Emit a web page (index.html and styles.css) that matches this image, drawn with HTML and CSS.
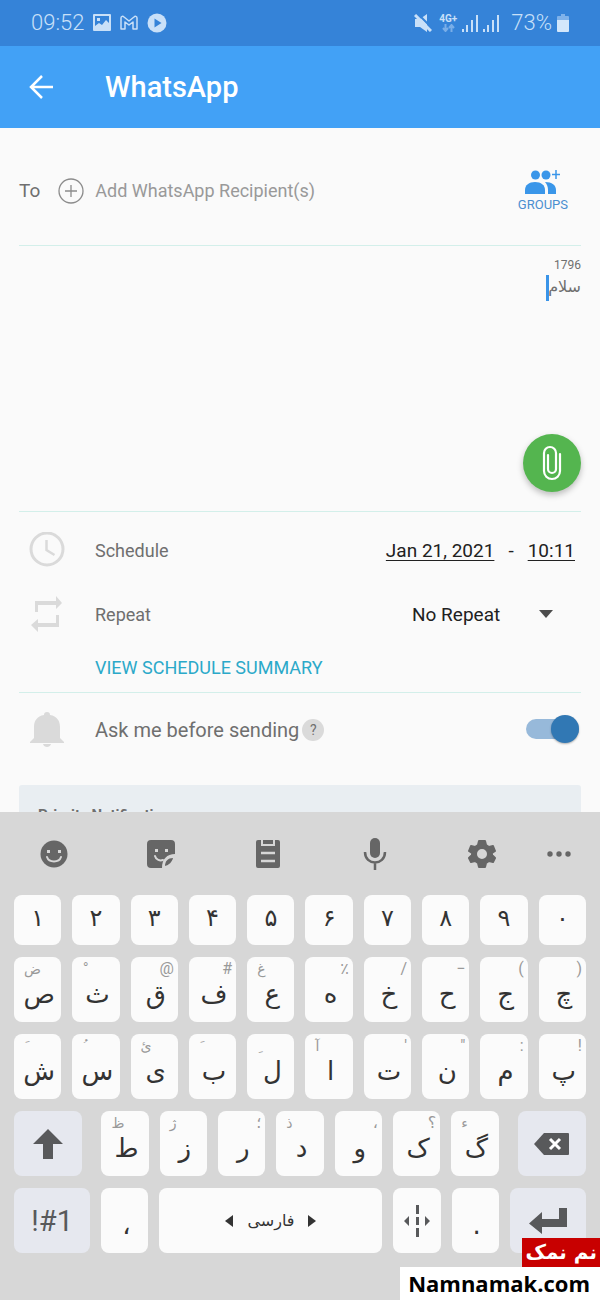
FILE: index.html
```html
<!DOCTYPE html>
<html lang="en">
<head>
  <meta charset="UTF-8">
  <meta name="viewport" content="width=device-width, initial-scale=1.0">
  <title>WhatsApp</title>
  <link rel="stylesheet" href="styles.css">
</head>
<body>
  <div class="screen">
    <div class="status-bar">
      <div class="status-group">
        <span class="status-text">09:52</span>
        <svg width="18" height="18" viewBox="0 0 18 18"><path fill="#c9e0f8" fill-rule="evenodd" d="M1 0h16a1 1 0 0 1 1 1v15a1 1 0 0 1-1 1H1a1 1 0 0 1-1-1V1a1 1 0 0 1 1-1zM2 2v10l4-3 3 2 4-5 3 3V2zM4 4h3v3H4z"/></svg>
        <svg width="18" height="16" viewBox="0 0 18 16"><path fill="none" stroke="#c9e0f8" stroke-width="1.5" stroke-linejoin="round" d="M1 14V3c0-2 2-2 3-1l5 4 5-4c1-1 3-1 3 1v11h-4V7L9 10 5 7v7z"/></svg>
        <svg width="20" height="20" viewBox="0 0 20 20"><circle cx="10" cy="10" r="9.500" fill="#c9e0f8"/><path fill="#3583d8" d="M7.500 5.500v9l7-4.500z"/></svg>
      </div>
      <div class="status-group status-right">
        <svg width="18" height="18" viewBox="0 0 18 18"><path fill="#c9e0f8" d="M1 5h5l7-5v18l-7-5H1z"/><path stroke="#3583d8" stroke-width="2" d="M3-1l16 16"/><path stroke="#c9e0f8" stroke-width="3" d="M1 1l16 16"/></svg>
        <span class="network">
          <span>4G+</span>
          <svg width="13" height="8" viewBox="0 0 13 8"><path fill="none" stroke="#79aee8" stroke-width="2" d="M3.500 0v7M1 4l2.500 3L6 4M9.500 8V1M7 4l2.500-3L12 4"/></svg>
        </span>
        <svg width="16" height="18" viewBox="0 0 16 18"><path fill="#c9e0f8" d="M0 15h2v3H0zM4 11h2v7H4zM9 6h2v12H9zM14 1h2v17h-2z"/></svg>
        <svg width="16" height="18" viewBox="0 0 16 18"><path fill="#c9e0f8" d="M0 15h2v3H0zM4 11h2v7H4zM9 6h2v12H9zM14 1h2v17h-2z"/></svg>
        <span class="status-text percent">73%</span>
        <svg width="12" height="18" viewBox="0 0 12 18"><path fill="#7fb2ea" d="M4 0h4v2h3a1 1 0 0 1 1 1v4H0V3a1 1 0 0 1 1-1h3z"/><path fill="#d3e7fb" d="M0 6h12v11a1 1 0 0 1-1 1H1a1 1 0 0 1-1-1z"/></svg>
      </div>
    </div>

    <header class="app-bar">
      <button class="icon-btn" type="button" aria-label="Back">
        <svg width="24" height="24" viewBox="0 0 24 24"><path fill="none" stroke="#fff" stroke-width="2.500" d="M13 1L2 12l11 11M2 12h22"/></svg>
      </button>
      <h1>WhatsApp</h1>
    </header>

    <main class="compose">
      <section class="recipient">
        <label for="recipient">To</label>
        <button class="icon-btn" type="button" aria-label="Add recipient">
          <svg width="26" height="26" viewBox="0 0 26 26"><circle cx="13" cy="13" r="12" fill="none" stroke="#8c8c8c" stroke-width="1.300"/><path stroke="#8c8c8c" stroke-width="1.300" d="M7 13h12M13 7v12"/></svg>
        </button>
        <input id="recipient" type="text" placeholder="Add WhatsApp Recipient(s)">
        <button class="groups" type="button">
          <svg width="36" height="26" viewBox="0 0 36 26"><g fill="#3a96e9"><circle cx="10.500" cy="6" r="4.500"/><circle cx="21" cy="6" r="4.500"/><path d="M0 25v-4c0-5 4-8 10-8s10 3 10 8v4z"/><path d="M20 13c7 0 11 3 11 8v4h-8v-4c0-3-1-6-3-8z"/></g><path stroke="#3a96e9" stroke-width="1.500" d="M31 1v9M27 5.500h8"/></svg>
          <span>GROUPS</span>
        </button>
      </section>

      <section class="message">
        <div class="counter">1796</div>
        <div class="message-field">
          <textarea dir="rtl" lang="fa" rows="1" aria-label="Message">سلام</textarea>
          <span class="caret"></span>
        </div>
        <button class="attach" type="button" aria-label="Attach">
          <svg width="20" height="36" viewBox="0 0 20 36"><path fill="none" stroke="#fff" stroke-width="2.200" stroke-linecap="round" d="M18 9v17a8 8 0 0 1-16 0V8a6 6 0 0 1 12 0v16a4 4 0 0 1-8 0V10"/></svg>
        </button>
      </section>

      <section class="schedule">
        <div class="row">
          <svg width="36" height="36" viewBox="0 0 36 36"><circle cx="18" cy="17" r="16" fill="none" stroke="#dadada" stroke-width="3"/><path fill="none" stroke="#dadada" stroke-width="2.500" d="M17.500 8v10l8 5"/></svg>
          <span class="label">Schedule</span>
          <span class="when">
            <a href="#date">Jan 21, 2021</a>
            <span>-</span>
            <a href="#time">10:11</a>
          </span>
        </div>
        <div class="row">
          <svg width="36" height="36" viewBox="0 0 36 36"><path fill="#dadada" d="M6 16V5h21V0l6 7-6 6V9H9v7zM30 19v12H9v5l-7-7 7-6v4h18v-8z"/></svg>
          <label class="label" for="repeat">Repeat</label>
          <span class="select">
            <select id="repeat">
              <option>No Repeat</option>
            </select>
            <svg width="14" height="8" viewBox="0 0 14 8"><path fill="#4c4c4c" d="M0 0h14L7 8z"/></svg>
          </span>
        </div>
        <a class="summary" href="#summary">VIEW SCHEDULE SUMMARY</a>
      </section>

      <section class="row confirm">
        <svg width="36" height="36" viewBox="0 0 36 36"><path fill="#dadada" d="M15 3a3 3 0 0 1 6 0c7 1 10 6 10 12v11l4 4v1H1v-1l4-4V15C5 9 8 4 15 3zM14 32h8c-1 4-7 4-8 0z"/></svg>
        <label class="label" for="ask">Ask me before sending</label>
        <button class="help" type="button">?</button>
        <input class="switch" id="ask" type="checkbox" role="switch" checked>
      </section>

      <section class="priority">Priority Notification</section>
    </main>

    <div class="keyboard">
      <div class="tools">
        <button class="icon-btn" type="button" aria-label="Emoji">
          <svg width="28" height="28" viewBox="0 0 28 28"><circle cx="14" cy="14" r="13.500" fill="#666"/><path fill="#d7d7d7" d="M7 10h3v3H7zM18 10h3v3h-3z"/><path fill="none" stroke="#d7d7d7" stroke-width="2" stroke-linecap="round" d="M7 17c2 6 12 6 14 0"/></svg>
        </button>
        <button class="icon-btn" type="button" aria-label="Stickers">
          <svg width="28" height="28" viewBox="0 0 28 28"><path fill="#666" d="M4 0h20a4 4 0 0 1 4 4v10c-8 0-13 5-13 14H4a4 4 0 0 1-4-4V4a4 4 0 0 1 4-4z"/><path fill="#666" d="M18 26c0-5 3-8 8-8-1 4-4 7-8 8z"/><path fill="#d7d7d7" d="M8 9h3v3H8zM18 9h3v3h-3z"/><path fill="none" stroke="#d7d7d7" stroke-width="2" stroke-linecap="round" d="M8 16c1 4 5 5 8 4"/></svg>
        </button>
        <button class="icon-btn" type="button" aria-label="Clipboard">
          <svg width="28" height="28" viewBox="0 0 28 28"><path fill="#666" d="M4 0h3v6h14V0h3a2 2 0 0 1 2 2v24a2 2 0 0 1-2 2H4a2 2 0 0 1-2-2V2a2 2 0 0 1 2-2zM9 0h10v4H9z"/><path stroke="#d7d7d7" stroke-width="2.500" d="M7 13h14M7 21h14"/></svg>
        </button>
        <button class="icon-btn" type="button" aria-label="Voice input">
          <svg width="28" height="32" viewBox="0 0 28 32"><rect x="9" y="0" width="10" height="20" rx="5" fill="#666"/><path fill="none" stroke="#666" stroke-width="2.500" d="M4 14c0 14 20 14 20 0M14 25v7"/></svg>
        </button>
        <button class="icon-btn" type="button" aria-label="Settings">
          <svg width="28" height="28" viewBox="0 0 28 28"><path fill="#666" fill-rule="evenodd" stroke="#666" stroke-width="2" stroke-linejoin="round" d="M11 1h6l1 4 3 2 4-1 2 5-3 2v2l3 3-2 4-4-1-3 2-1 4h-6l-1-4-3-2-4 1-2-4 3-3v-2l-3-2 2-5 4 1 3-2zM14 8a6 6 0 1 0 0 12 6 6 0 0 0 0-12z"/></svg>
        </button>
        <button class="icon-btn more" type="button" aria-label="More">
          <svg width="24" height="6" viewBox="0 0 24 6"><g fill="#666"><circle cx="3" cy="3" r="2.700"/><circle cx="12" cy="3" r="2.700"/><circle cx="21" cy="3" r="2.700"/></g></svg>
        </button>
      </div>

      <div class="keys" lang="fa">
        <div class="key-row digits">
          <button class="key">۱</button>
          <button class="key">۲</button>
          <button class="key">۳</button>
          <button class="key">۴</button>
          <button class="key">۵</button>
          <button class="key">۶</button>
          <button class="key">۷</button>
          <button class="key">۸</button>
          <button class="key">۹</button>
          <button class="key">۰</button>
        </div>
        <div class="key-row">
          <button class="key"><span class="alt">ض</span>ص</button>
          <button class="key"><span class="alt">&nbsp;ْ</span>ث</button>
          <button class="key"><span class="alt sign">@</span>ق</button>
          <button class="key"><span class="alt sign">#</span>ف</button>
          <button class="key"><span class="alt">غ</span>ع</button>
          <button class="key"><span class="alt sign">٪</span>ه</button>
          <button class="key"><span class="alt sign">/</span>خ</button>
          <button class="key"><span class="alt sign">−</span>ح</button>
          <button class="key"><span class="alt sign">(</span>ج</button>
          <button class="key"><span class="alt sign">)</span>چ</button>
        </div>
        <div class="key-row">
          <button class="key"><span class="alt">&nbsp;َ</span>ش</button>
          <button class="key"><span class="alt">&nbsp;ُ</span>س</button>
          <button class="key"><span class="alt">ئ</span>ی</button>
          <button class="key"><span class="alt">&nbsp;َ</span>ب</button>
          <button class="key"><span class="alt">&nbsp;ِ</span>ل</button>
          <button class="key"><span class="alt">آ</span>ا</button>
          <button class="key"><span class="alt sign">'</span>ت</button>
          <button class="key"><span class="alt sign">"</span>ن</button>
          <button class="key"><span class="alt sign">:</span>م</button>
          <button class="key"><span class="alt sign">!</span>پ</button>
        </div>
        <div class="key-row">
          <button class="key shift" aria-label="Shift">
            <svg width="30" height="30" viewBox="0 0 30 30"><path fill="#58595b" d="M15 0l15 15H20v15H10V15H0z"/></svg>
          </button>
          <button class="key"><span class="alt">ظ</span>ط</button>
          <button class="key"><span class="alt">ژ</span>ز</button>
          <button class="key"><span class="alt sign">؛</span>ر</button>
          <button class="key"><span class="alt">ذ</span>د</button>
          <button class="key"><span class="alt sign">،</span>و</button>
          <button class="key"><span class="alt sign">؟</span>ک</button>
          <button class="key"><span class="alt">ء</span>گ</button>
          <button class="key delete" aria-label="Delete">
            <svg width="36" height="22" viewBox="0 0 36 22"><path fill="#58595b" d="M10 0h24a1 1 0 0 1 1 1v20a1 1 0 0 1-1 1H10L0 11z"/><path stroke="#fff" stroke-width="3" d="M16 6l10 10M26 6L16 16"/></svg>
          </button>
        </div>
        <div class="key-row">
          <button class="key wide symbols" lang="en">!#1</button>
          <button class="key">،</button>
          <button class="key space">
            <svg width="8" height="12" viewBox="0 0 8 12"><path fill="#333" d="M8 0v12L0 6z"/></svg>
            <span>فارسی</span>
            <svg width="8" height="12" viewBox="0 0 8 12"><path fill="#333" d="M0 0v12l8-6z"/></svg>
          </button>
          <button class="key split" aria-label="Split keyboard">
            <svg width="26" height="32" viewBox="0 0 26 32"><path fill="#58595b" d="M5 11v10l-5-5zM21 11v10l5-5zM12 0h3v9h-3zM12 12h3v8h-3zM12 23h3v9h-3z"/></svg>
          </button>
          <button class="key">.</button>
          <button class="key wide" aria-label="Enter">
            <svg width="38" height="26" viewBox="0 0 38 26"><path fill="#58595b" d="M30 0h8v19H13v7L0 15.500 13 4v7h17z"/></svg>
          </button>
        </div>
      </div>
    </div>

    <div class="watermark">
      <span class="watermark-fa" lang="fa">نم نمک</span>
      <span class="watermark-en">Namnamak.com</span>
    </div>
  </div>
</body>
</html>
```

FILE: styles.css
```css
* {
  margin: 0;
  padding: 0;
  box-sizing: border-box;
}

body {
  font-family: Roboto, 'DejaVu Sans', sans-serif;
  background: #fafafa;
  color: #6f6f6f;
}

svg {
  display: block;
  flex: none;
}

button {
  border: none;
  background: none;
  font-family: inherit;
  color: inherit;
  cursor: pointer;
}

.screen {
  position: relative;
  height: 100vh;
  display: flex;
  flex-direction: column;
}

/* Status bar */
.status-bar {
  display: flex;
  justify-content: space-between;
  align-items: center;
  height: 46px;
  padding: 0 31px;
  background: #3583d8;
  color: #c9e0f8;
}

.status-group {
  display: flex;
  align-items: center;
  gap: 9px;
}

.status-right {
  gap: 5px;
}

.status-text {
  font-size: 22px;
  font-weight: 300;
  line-height: 48px;
}

.percent {
  margin-left: 7px;
}

.network {
  display: flex;
  flex-direction: column;
  align-items: center;
  margin-left: 2px;
  font-size: 10px;
  font-weight: 700;
  line-height: 10px;
}

/* App bar */
.app-bar {
  display: flex;
  align-items: center;
  gap: 52px;
  height: 82px;
  padding: 0 29px;
  background: #42a1f6;
  color: #fff;
}

.app-bar h1 {
  font-size: 29px;
  font-weight: 500;
  line-height: 36px;
}

/* Compose form */
.compose {
  flex: 1;
  min-height: 0;
  padding: 0 19px;
  overflow: hidden;
}

.recipient {
  display: flex;
  align-items: center;
  height: 118px;
  padding: 8px 13px 0 0;
  border-bottom: 1px solid #d3efea;
  font-size: 19px;
}

.recipient .icon-btn {
  margin: 0 11px 0 18px;
}

.recipient input {
  flex: 1;
  min-width: 0;
  border: none;
  outline: none;
  background: none;
  font-family: inherit;
  font-size: 18px;
  color: #6f6f6f;
}

.recipient input::placeholder {
  color: #999;
}

.groups {
  display: flex;
  flex-direction: column;
  align-items: center;
  gap: 2px;
  font-size: 13px;
  line-height: 16px;
  color: #4a8fd0;
}

.message {
  display: flex;
  flex-direction: column;
  height: 266px;
  padding: 11px 0 19px;
  border-bottom: 1px solid #d3efea;
}

.counter {
  font-size: 12px;
  line-height: 16px;
  text-align: right;
}

.message-field {
  position: relative;
  flex: 1;
}

.message-field textarea {
  width: 100%;
  height: 100%;
  border: none;
  outline: none;
  resize: none;
  background: none;
  font-family: 'DejaVu Sans', sans-serif;
  font-size: 16px;
  line-height: 28px;
  color: #6f6f6f;
}

.caret {
  position: absolute;
  top: 2px;
  right: 32px;
  width: 3px;
  height: 26px;
  background: #3a94e8;
}

.attach {
  align-self: flex-end;
  display: flex;
  align-items: center;
  justify-content: center;
  width: 58px;
  height: 58px;
  border-radius: 50%;
  background: #54b54f;
  box-shadow: 0 3px 6px rgba(0, 0, 0, 0.25);
}

.schedule {
  padding-top: 6px;
  border-bottom: 1px solid #d3efea;
}

.row {
  display: flex;
  align-items: center;
  height: 64px;
  padding-left: 10px;
  font-size: 18px;
}

.label {
  margin-left: 30px;
}

.when {
  display: flex;
  gap: 14px;
  margin-left: auto;
  padding-right: 6px;
  font-size: 19px;
  color: #212121;
}

.when a {
  color: inherit;
  text-underline-offset: 3px;
}

.select {
  position: relative;
  display: flex;
  align-items: center;
  margin-left: auto;
  padding-right: 28px;
}

.select select {
  appearance: none;
  width: 141px;
  padding-right: 30px;
  border: none;
  outline: none;
  background: none;
  font-family: inherit;
  font-size: 19px;
  color: #212121;
}

.select svg {
  position: absolute;
  right: 28px;
  pointer-events: none;
}

.summary {
  display: block;
  padding: 0 0 2px 76px;
  font-size: 18px;
  line-height: 44px;
  color: #2ba9c9;
  text-decoration: none;
}

.confirm {
  height: 74px;
  font-size: 20px;
}

.help {
  width: 22px;
  height: 22px;
  margin-left: 3px;
  border-radius: 50%;
  background: #dadada;
  font-size: 14px;
}

.switch {
  appearance: none;
  position: relative;
  width: 53px;
  height: 20px;
  margin: 0 2px 2px auto;
  border-radius: 10px;
  background: #97b9da;
}

.switch::before {
  content: '';
  position: absolute;
  top: -4px;
  right: 0;
  width: 28px;
  height: 28px;
  border-radius: 50%;
  background: #3178b4;
  box-shadow: 0 1px 2px rgba(0, 0, 0, 0.3);
}

.priority {
  height: 60px;
  margin-top: 18px;
  padding: 20px 19px;
  border-radius: 3px;
  background: #e9eef2;
  font-size: 15px;
  font-weight: 700;
  line-height: 20px;
}

/* Keyboard */
.keyboard {
  padding: 0 14px 47px;
  background: #d7d7d7;
  color: #333;
}

.tools {
  display: flex;
  align-items: center;
  justify-content: space-between;
  height: 83px;
  padding: 0 15px 0 26px;
}

.tools .more {
  margin-left: -28px;
}

.keys {
  display: flex;
  flex-direction: column;
  gap: 12px;
}

.key-row {
  display: flex;
  gap: 11px;
}

.key {
  position: relative;
  flex: 47 1 0;
  min-width: 0;
  height: 65px;
  padding-top: 8px;
  border-radius: 8px;
  background: #fbfbfb;
  font-family: 'DejaVu Sans', sans-serif;
  font-size: 26px;
  line-height: 30px;
  text-indent: 3px;
}

.digits .key {
  height: 50px;
  padding: 0 0 4px;
  font-size: 24px;
  text-indent: 0;
}

.alt {
  position: absolute;
  top: 0;
  left: 10px;
  font-size: 14px;
  line-height: 24px;
  color: #999;
  text-indent: 0;
}

.alt.sign {
  left: auto;
  right: 4px;
  font-family: Roboto, 'DejaVu Sans', sans-serif;
  font-size: 16px;
}

.shift,
.delete,
.wide,
.space,
.split {
  display: flex;
  align-items: center;
  justify-content: center;
  padding: 0;
  text-indent: 0;
}

.shift,
.delete,
.wide {
  background: #e6e8ef;
}

.shift {
  flex-grow: 68;
  margin-right: 8px;
}

.delete {
  flex-grow: 68;
  margin-left: 8px;
}

.wide {
  flex-grow: 76;
}

.symbols {
  font-family: Roboto, sans-serif;
  font-size: 29px;
  color: #58595b;
}

.space {
  flex-grow: 222;
  gap: 14px;
  font-size: 16px;
}

/* Watermark over the keyboard corner */
.watermark {
  position: absolute;
  right: 0;
  bottom: 0;
  display: flex;
  flex-direction: column;
  align-items: flex-end;
}

.watermark-fa {
  padding: 0 3px;
  background: #c80000;
  color: #fff;
  font-family: 'DejaVu Sans', sans-serif;
  font-size: 20px;
  font-weight: 700;
  line-height: 29px;
}

.watermark-en {
  padding: 0 10px 0 8px;
  background: #fff;
  color: #000;
  font-family: 'Open Sans', sans-serif;
  font-size: 22px;
  font-weight: 700;
  line-height: 33px;
}
```
